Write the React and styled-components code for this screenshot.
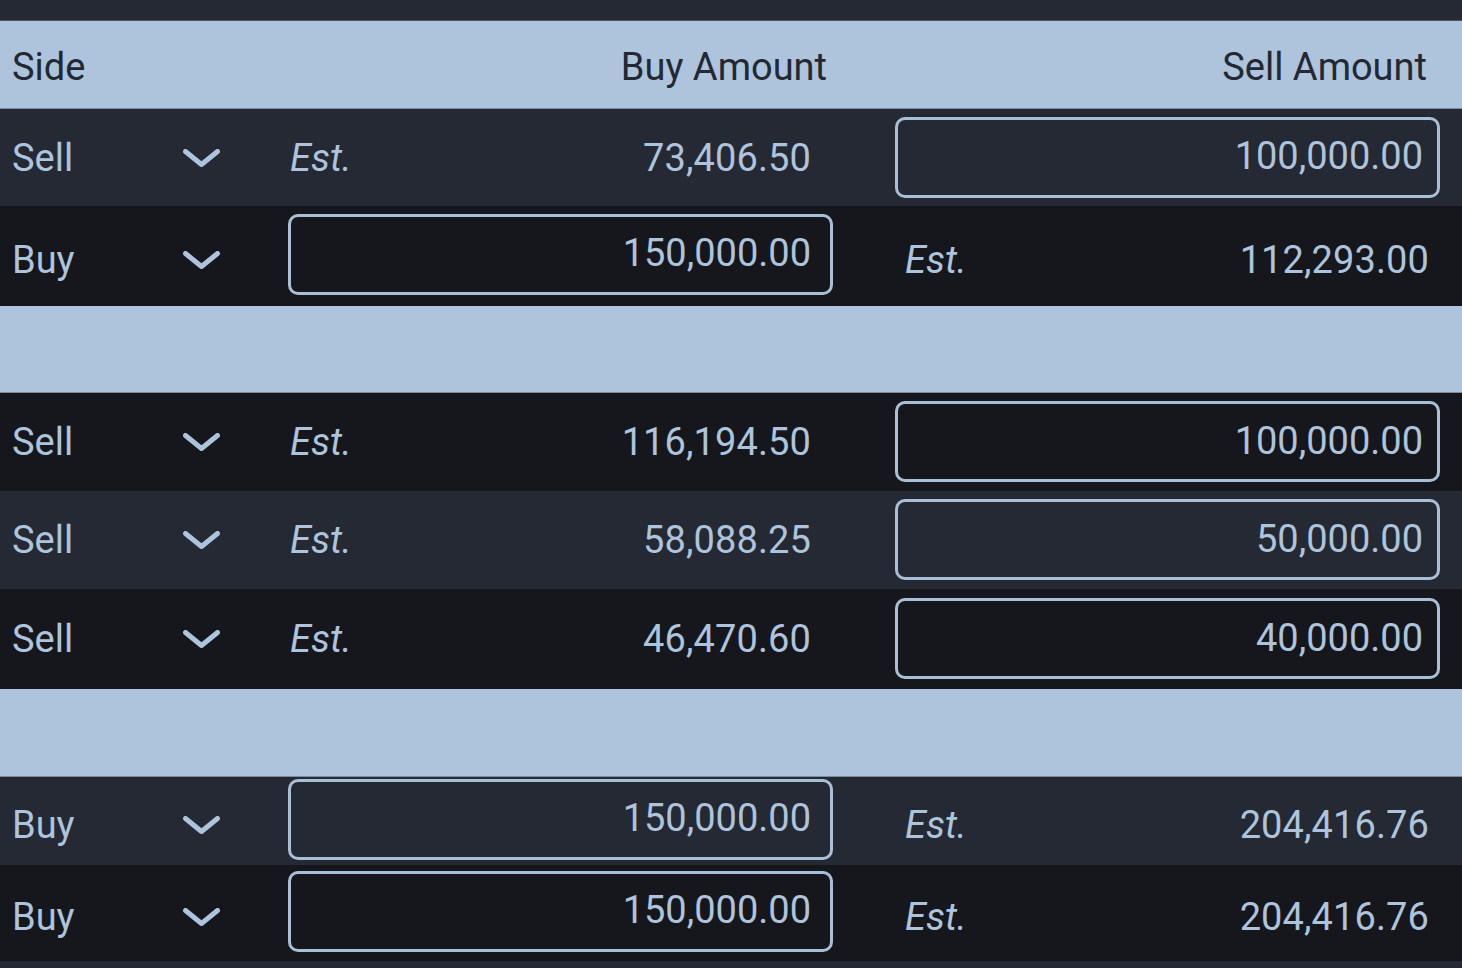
import React from "react";
import styled, { createGlobalStyle } from "styled-components";

const GlobalStyle = createGlobalStyle`
  html, body {
    margin: 0;
    padding: 0;
    background: #16171c;
    overflow: hidden;
  }
  body {
    font-family: Roboto, "Noto Sans", sans-serif;
  }
`;

const tones = {
  dark: "#16171c",
  alt: "#252934",
};

// Table wrapper
const Table = styled.div`
  width: 1462px;
  display: flex;
  flex-direction: column;
`;

// Filler strip standing for rows scrolled out of view
const Stub = styled.div`
  height: ${(p) => p.$h}px;
  background: ${(p) => tones[p.$tone]};
  border-bottom: ${(p) => (p.$edge ? "1px solid #4c5564" : "none")};
`;

// side | buy | gutter | sell
const Grid = styled.div`
  display: grid;
  grid-template-columns: 288px 545px 62px 545px;
  padding-right: 22px;
  align-items: center;
  height: ${(p) => p.$h}px;
  box-sizing: border-box;
`;

// Light blue band: column header and group separators
const HeaderBand = styled(Grid)`
  background: #adc4dc;
  color: #232833;
  font-size: 38px;
  border-bottom: 1px solid #7d8ca0;
`;

const HeadCell = styled.div`
  grid-column: ${(p) => (p.$col === "sell" ? 4 : "auto")};
  text-align: ${(p) => (p.$col ? "right" : "left")};
  padding-left: ${(p) => (p.$col ? 0 : 12)}px;
  padding-right: ${(p) => (p.$col === "sell" ? 13 : p.$col ? 6 : 0)}px;
  padding-top: 4px;
`;

const Row = styled(Grid)`
  background: ${(p) => tones[p.$tone]};
  color: #adc4dc;
  font-size: 38px;
`;

const SideCell = styled.div`
  display: flex;
  align-items: center;
  justify-content: space-between;
  padding: ${(p) => (p.$low ? "8px" : "0")} 68px 0 12px;
`;

const Chevron = styled.svg`
  width: 37px;
  height: 18px;
  display: block;
`;

const EstCell = styled.div`
  grid-column: ${(p) => (p.$col === "sell" ? 4 : 2)};
  display: flex;
  align-items: center;
  justify-content: space-between;
  padding-left: ${(p) => (p.$col === "sell" ? 10 : 2)}px;
  padding-right: ${(p) => (p.$col === "sell" ? 11 : 22)}px;
  padding-top: ${(p) => (p.$low ? 8 : 0)}px;
`;

const Est = styled.span`
  font-style: italic;
`;

const Value = styled.span`
  letter-spacing: 0.1px;
`;

const AmountInput = styled.input`
  grid-column: ${(p) => (p.$col === "sell" ? 4 : 2)};
  box-sizing: border-box;
  width: 100%;
  height: 81px;
  margin: ${(p) => (p.$col === "buy" ? "-4px 0 0" : "-1px 0 0")};
  background: transparent;
  border: 3px solid #a9bfd7;
  border-radius: 10px;
  color: #adc4dc;
  font-family: Roboto, "Noto Sans", sans-serif;
  font-size: 38px;
  text-align: right;
  padding: 0 ${(p) => (p.$col === "sell" ? 14 : 19)}px 2px 0;
  outline: none;
`;

const rows = [
  { type: "head" },
  { side: "Sell", tone: "alt", h: 97, buy: "73,406.50", sell: "100,000.00", input: "sell" },
  { side: "Buy", tone: "dark", h: 100, buy: "150,000.00", sell: "112,293.00", input: "buy" },
  { type: "group", h: 87 },
  { side: "Sell", tone: "dark", h: 98, buy: "116,194.50", sell: "100,000.00", input: "sell" },
  { side: "Sell", tone: "alt", h: 98, buy: "58,088.25", sell: "50,000.00", input: "sell" },
  { side: "Sell", tone: "dark", h: 100, buy: "46,470.60", sell: "40,000.00", input: "sell" },
  { type: "group", h: 88 },
  { side: "Buy", tone: "alt", h: 88, buy: "150,000.00", sell: "204,416.76", input: "buy" },
  { side: "Buy", tone: "dark", h: 96, buy: "150,000.00", sell: "204,416.76", input: "buy" },
];

const ChevronIcon = () => (
  <Chevron viewBox="0 0 37 18" fill="none">
    <path
      d="M2.5 2.5 L18.5 15.5 L34.5 2.5"
      stroke="#adc4dc"
      strokeWidth="5"
      strokeLinecap="round"
      strokeLinejoin="round"
    />
  </Chevron>
);

const AmountCell = ({ col, value, editable, low }) =>
  editable ? (
    <AmountInput $col={col} defaultValue={value} />
  ) : (
    <EstCell $col={col} $low={low}>
      <Est>Est.</Est>
      <Value>{value}</Value>
    </EstCell>
  );

export default function App() {
  return (
    <>
      <GlobalStyle />
      <Table>
        <Stub $h={20} $tone="alt" $edge />
        {rows.map((r, i) => {
          if (r.type === "head") {
            return (
              <HeaderBand key={i} $h={88}>
                <HeadCell>Side</HeadCell>
                <HeadCell $col="buy">Buy Amount</HeadCell>
                <HeadCell $col="sell">Sell Amount</HeadCell>
              </HeaderBand>
            );
          }
          if (r.type === "group") {
            return <HeaderBand key={i} $h={r.h} />;
          }
          const low = r.input === "buy";
          return (
            <Row key={i} $tone={r.tone} $h={r.h}>
              <SideCell $low={low}>
                <span>{r.side}</span>
                <ChevronIcon />
              </SideCell>
              <AmountCell col="buy" value={r.buy} editable={r.input === "buy"} low={low} />
              <AmountCell col="sell" value={r.sell} editable={r.input === "sell"} low={low} />
            </Row>
          );
        })}
        <Stub $h={8} $tone="alt" />
      </Table>
    </>
  );
}
